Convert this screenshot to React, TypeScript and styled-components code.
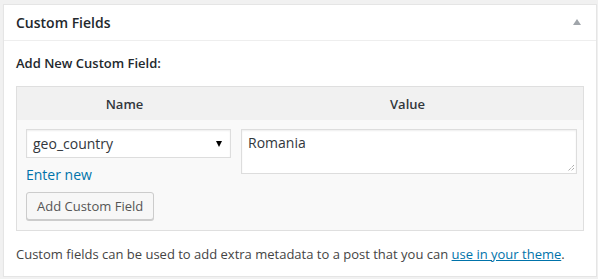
import React from "react";
import styled, { createGlobalStyle } from "styled-components";

const Global = createGlobalStyle`
  html, body { margin: 0; padding: 0; background: #f1f1f1; }
  body { font-family: "Open Sans", "Liberation Sans", sans-serif; color: #444; font-size: 13px; }
  * { box-sizing: border-box; }
`;

const Panel = styled.div`
  margin: 4px 0 0 3px;
  width: 594px;
  background: #fff;
  border: 1px solid #e5e5e5;
  box-shadow: 0 1px 1px rgba(0, 0, 0, 0.04);
`;

const Header = styled.div`
  height: 36px;
  border-bottom: 1px solid #eee;
  padding: 0 15px 0 12px;
  display: flex;
  align-items: center;
  justify-content: space-between;
`;

const Title = styled.h2`
  margin: 0;
  font-size: 14px;
  font-weight: 600;
  color: #23282d;
  line-height: 1.4;
`;

const Toggle = styled.span`
  width: 0;
  height: 0;
  border-left: 4px solid transparent;
  border-right: 4px solid transparent;
  border-bottom: 6px solid #a0a5aa;
  margin-top: -1px;
`;

const Inside = styled.div`
  padding: 12px 12px 12px;
`;

const Label = styled.p`
  margin: 0 0 13px;
  font-weight: 600;
  font-size: 13px;
  line-height: 20px;
  color: #23282d;
`;

const Table = styled.div`
  border: 1px solid #dfdfdf;
  background: #f9f9f9;
  display: grid;
  grid-template-columns: 215px 1fr;
`;

const Th = styled.div`
  background: #f1f1f1;
  height: 33px;
  display: flex;
  align-items: center;
  justify-content: center;
  font-weight: 600;
  font-size: 13px;
  color: #32373c;
`;

const Cell = styled.div<{ $pad: string }>`
  padding: ${(p) => p.$pad};
  display: flex;
  flex-direction: column;
  align-items: flex-start;
`;

const SelectBox = styled.div`
  width: 205px;
  height: 29px;
  border: 1px solid #ddd;
  background: #fff;
  box-shadow: inset 0 1px 2px rgba(0, 0, 0, 0.07);
  display: flex;
  align-items: center;
  justify-content: space-between;
  padding: 0 8px 0 6px;
  font-size: 14px;
  color: #32373c;
`;

const Caret = styled.span`
  width: 0;
  height: 0;
  border-left: 3.5px solid transparent;
  border-right: 3.5px solid transparent;
  border-top: 6px solid #000;
  margin-top: 1px;
`;

const Link = styled.a`
  color: #0073aa;
  font-size: 14px;
  text-decoration: none;
  margin: 7px 0 0 0;
  line-height: 20px;
`;

const Button = styled.button`
  margin-top: 7px;
  height: 28px;
  padding: 0 10px 1px;
  font-family: inherit;
  font-size: 13px;
  color: #555;
  background: #f7f7f7;
  border: 1px solid #ccc;
  border-radius: 3px;
  box-shadow: 0 1px 0 #ccc;
`;

const TextArea = styled.div`
  position: relative;
  width: 336px;
  height: 45px;
  border: 1px solid #ddd;
  background: #fff;
  box-shadow: inset 0 1px 2px rgba(0, 0, 0, 0.07);
  padding: 3px 6px;
  font-size: 14px;
  line-height: 20px;
  color: #32373c;
`;

const Grip = styled.svg`
  position: absolute;
  right: 1px;
  bottom: 1px;
`;

const Footer = styled.p`
  margin: 13px 0 0 0;
  font-size: 13px;
  line-height: 20px;
  color: #444;
  a {
    color: #0073aa;
    text-decoration: underline;
  }
`;

export default function App() {
  return (
    <>
      <Global />
      <Panel>
        <Header>
          <Title>Custom Fields</Title>
          <Toggle />
        </Header>
        <Inside>
          <Label>Add New Custom Field:</Label>
          <Table>
            <Th>Name</Th>
            <Th>Value</Th>
            <Cell $pad="9px 0 10px 9px">
              <SelectBox>
                <span>geo_country</span>
                <Caret />
              </SelectBox>
              <Link href="#">Enter new</Link>
              <Button>Add Custom Field</Button>
            </Cell>
            <Cell $pad="9px 0 0 9px">
              <TextArea>
                Romania
                <Grip width="8" height="8" viewBox="0 0 8 8">
                  <path d="M7 1 L1 7 M7 4 L4 7" stroke="#888" strokeWidth="1" strokeDasharray="1 1" fill="none" />
                </Grip>
              </TextArea>
            </Cell>
          </Table>
          <Footer>
            Custom fields can be used to add extra metadata to a post that you can <a href="#">use in your theme</a>.
          </Footer>
        </Inside>
      </Panel>
    </>
  );
}
